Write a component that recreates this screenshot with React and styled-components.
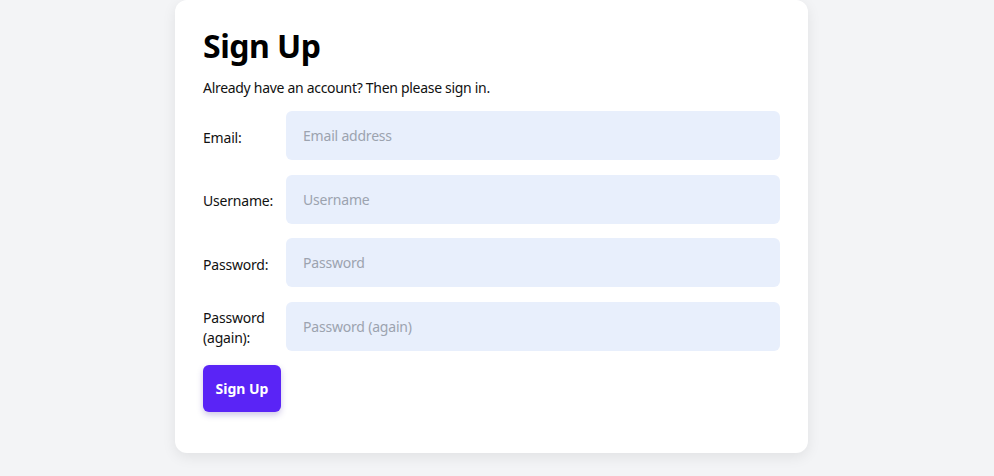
import React from 'react';
import styled, { createGlobalStyle } from 'styled-components';

const GlobalStyle = createGlobalStyle`
  html, body {
    margin: 0;
    padding: 0;
    background: #f3f4f6;
    font-family: "Noto Sans", "Open Sans", Arial, sans-serif;
    color: #111;
  }
`;

const Page = styled.div`
  display: flex;
  justify-content: center;
  padding-right: 11px;
  min-height: 476px;
  box-sizing: border-box;
`;

const Card = styled.div`
  width: 633px;
  height: 453px;
  box-sizing: border-box;
  background: #ffffff;
  border-radius: 12px;
  padding: 24px 28px 41px;
  box-shadow: 0 4px 14px rgba(0, 0, 0, 0.08);
`;

const Title = styled.h1`
  margin: 0;
  font-size: 32px;
  line-height: 44px;
  font-weight: 700;
  letter-spacing: -0.5px;
  color: #000;
`;

const Subtitle = styled.p`
  margin: 10px 0 13px;
  font-size: 14px;
  line-height: 20px;
  letter-spacing: -0.3px;
  color: #111;
`;

const Form = styled.form`
  display: grid;
  grid-template-columns: 83px 1fr;
  row-gap: 14.5px;
  align-items: center;
`;

const Label = styled.label`
  font-size: 14px;
  line-height: 20px;
  letter-spacing: -0.2px;
  color: #111;
  padding-top: 4px;
`;

const Input = styled.input`
  height: 49px;
  box-sizing: border-box;
  border: none;
  border-radius: 6px;
  background: #e8effc;
  padding: 0 17px;
  font-family: inherit;
  font-size: 14px;
  letter-spacing: -0.2px;
  color: #111;
  outline: none;

  &::placeholder {
    color: #9ca3af;
  }
`;

const Button = styled.button`
  grid-column: 1 / 2;
  justify-self: start;
  width: 78px;
  height: 47px;
  border: none;
  border-radius: 6px;
  background: #5a24f6;
  color: #fff;
  font-family: inherit;
  font-size: 14px;
  font-weight: 700;
  box-shadow: 0 3px 6px rgba(60, 30, 160, 0.25);
  cursor: pointer;
`;

const fields = [
  { id: 'email', label: 'Email:', placeholder: 'Email address', type: 'email' },
  { id: 'username', label: 'Username:', placeholder: 'Username', type: 'text' },
  { id: 'password', label: 'Password:', placeholder: 'Password', type: 'password' },
  { id: 'password2', label: 'Password (again):', placeholder: 'Password (again)', type: 'password' },
];

export default function App() {
  return (
    <>
      <GlobalStyle />
      <Page>
        <Card>
          <Title>Sign Up</Title>
          <Subtitle>Already have an account? Then please sign in.</Subtitle>
          <Form onSubmit={(e) => e.preventDefault()}>
            {fields.map((f) => (
              <React.Fragment key={f.id}>
                <Label htmlFor={f.id}>{f.label}</Label>
                <Input id={f.id} type={f.type} placeholder={f.placeholder} />
              </React.Fragment>
            ))}
            <Button type="submit">Sign Up</Button>
          </Form>
        </Card>
      </Page>
    </>
  );
}
